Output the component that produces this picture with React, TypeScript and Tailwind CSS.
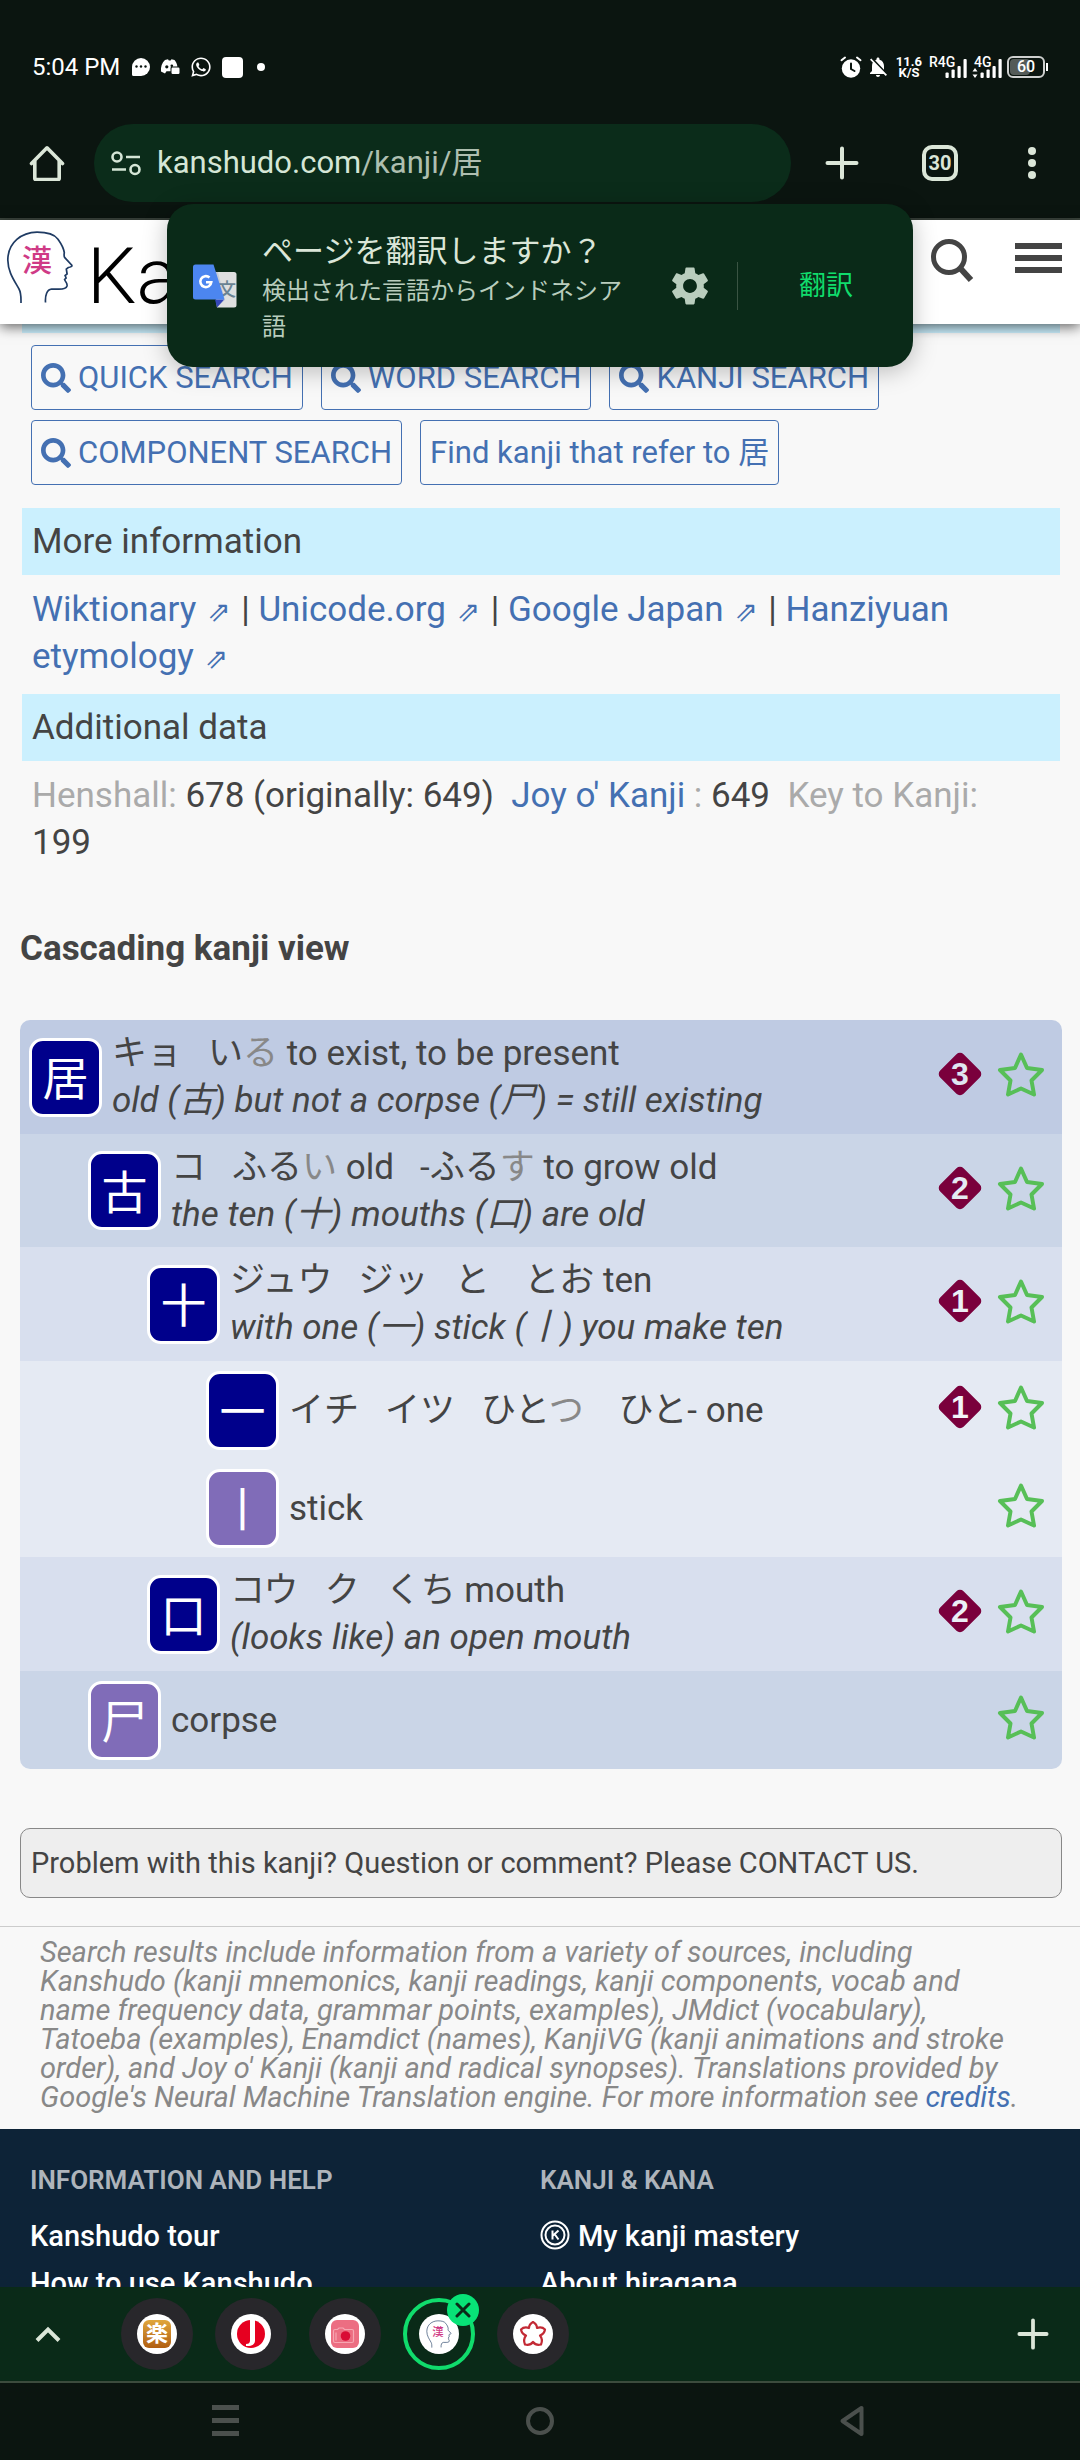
import type { ReactNode } from "react";
import { FaSearch, FaWhatsapp } from "react-icons/fa";
import { MdSettings, MdNotificationsOff } from "react-icons/md";

/* ---------- small drawings ---------- */

function ChatIcon() {
  return (
    <svg viewBox="0 0 18 18" className="size-[18px]" aria-hidden="true">
      <path d="M9 0a9 9 0 0 1 0 18H1.500a1.500 1.500 0 0 1-1.500-1.500V9a9 9 0 0 1 9-9z" fill="#fff" />
      <circle cx="4.500" cy="8.500" r="1.200" fill="#0b1510" />
      <circle cx="9" cy="8.500" r="1.200" fill="#0b1510" />
      <circle cx="13.500" cy="8.500" r="1.200" fill="#0b1510" />
    </svg>
  );
}

function ControllerIcon() {
  return (
    <svg viewBox="0 0 20 18" className="h-[18px] w-5" aria-hidden="true">
      <path d="M5 2l3-.8.8 1.300h1.800L11.500 1.200 14.500 2c1.600 1.800 2.600 4 2.900 6.500H12a1.500 1.500 0 0 0-1.500 1.500v3.200H6.500L5 15.500 1 13.500C.5 9 2 4.800 5 2z" fill="#fff" />
      <circle cx="6.800" cy="8.800" r="1.600" fill="#0b1510" />
      <circle cx="11.800" cy="7.800" r="1.300" fill="#0b1510" />
      <rect x="11.500" y="9.500" width="8" height="6.500" rx="1.200" fill="#fff" />
    </svg>
  );
}

function AlarmIcon() {
  return (
    <svg viewBox="0 0 22 22" className="size-[22px]" fill="none" stroke="#fff" strokeLinecap="round" aria-hidden="true">
      <circle cx="11" cy="12.500" r="9.200" fill="#fff" stroke="none" />
      <path d="M1.500 4.200 5 1.500M20.500 4.200 17 1.500" strokeWidth="2" />
      <path d="M11 7.500v5.500l3.500 2" stroke="#0b1510" strokeWidth="2" />
    </svg>
  );
}

function SignalBars({ arrows = false }: { arrows?: boolean }) {
  return (
    <svg viewBox="0 0 30 20" className="h-5 w-[30px]" aria-hidden="true">
      {arrows && <path d="M3 10l2.500 3.500h-5zM3 20l2.500-3.500h-5z" fill="#fff" />}
      <rect x="8.500" y="14.500" width="3.200" height="5.500" rx="1" fill="#fff" />
      <rect x="14.500" y="11.500" width="3.200" height="8.500" rx="1" fill="#fff" />
      <rect x="20.500" y="8" width="3.200" height="12" rx="1" fill="#fff" />
      <rect x="26.500" y="1" width="3.200" height="19" rx="1" fill="#fff" />
    </svg>
  );
}

function TuneIcon() {
  return (
    <svg viewBox="0 0 32 26" className="h-[26px] w-8" fill="none" stroke="#d5e6d6" strokeWidth="2.600" aria-hidden="true">
      <circle cx="7" cy="7" r="4.500" />
      <path d="M16 7h14M2 19.500h14" />
      <circle cx="25" cy="19.500" r="4.500" />
    </svg>
  );
}

function HomeIcon() {
  return (
    <svg viewBox="0 0 36 36" className="size-9" fill="none" stroke="#dbe6d8" strokeWidth="3.600" strokeLinejoin="round" aria-hidden="true">
      <path d="M2.500 18.500 18 2.800l15.500 15.700" strokeLinecap="round" />
      <path d="M5.800 16v17.500a1 1 0 0 0 1 1h22.400a1 1 0 0 0 1-1V16" />
    </svg>
  );
}

function PlusIcon({ className }: { className: string }) {
  return (
    <svg viewBox="0 0 34 34" className={className} stroke="#dbe6d8" strokeWidth="4" strokeLinecap="round" aria-hidden="true">
      <path d="M17 2.500v29M2.500 17h29" />
    </svg>
  );
}

function HeadLogo({ className }: { className: string }) {
  return (
    <svg viewBox="0 0 70 74" className={className} fill="none" aria-hidden="true">
      <path
        d="M16 73c0-6 .3-10-2-14C9 50 3 42 2.800 30 3 12 17 2.500 32 2.200c10 0 17 1.500 21 7 3.500 5 5.500 7.500 6.300 13.500-.5 3-.3 4 .5 5l7 7.500c.5 1.200-1 1.800-3.500 2.300l-2 1.500.8 5-2 1.500 1 2.500-1.500 1.500c1 3 3 3.500 2.400 6.500-.8 2.800-4 3.200-8 3.200h-7.500c-4.500.3-6.500 6-6 13.300"
        stroke="#1f3b63"
        strokeWidth="1.700"
      />
      <text x="32" y="41" textAnchor="middle" fontSize="30" fontWeight="500" fill="#cf3a86" fontFamily='"Noto Sans CJK JP", sans-serif'>
        漢
      </text>
    </svg>
  );
}

function TranslateIcon() {
  return (
    <svg viewBox="0 0 44 44" className="size-11 shrink-0" aria-hidden="true">
      <path d="M21 8h20a2.500 2.500 0 0 1 2.500 2.500v30.500a2.500 2.500 0 0 1-2.500 2.500H24z" fill="#dfe0e0" />
      <path d="M21 8h4l7 28-8 7.500z" fill="#c6cbd6" />
      <text x="34" y="32" textAnchor="middle" fontSize="18" fontWeight="500" fill="#6a8393" fontFamily='"Noto Sans CJK JP", sans-serif'>
        文
      </text>
      <path d="M22 35.500h9.200L24 43.500z" fill="#3547b8" />
      <path d="M2.500.5h18L31.500 35.500h-29A2.500 2.500 0 0 1 0 33V3A2.500 2.500 0 0 1 2.500.5z" fill="#4c86f0" />
      <path d="M16.500 13.500a5.500 5.500 0 1 0 1.800 4.700h-5.300" fill="none" stroke="#fff" strokeWidth="2.600" />
    </svg>
  );
}

function StarIcon() {
  return (
    <svg viewBox="0 0 48 46" className="h-[46px] w-12" fill="none" stroke="#57bf57" strokeWidth="4" strokeLinejoin="round" aria-hidden="true">
      <path d="M24 3.500 30 17 45 19 34.500 29.500 37 43.500 24 37.500 11 43.500 13.500 29.500 3 19 18 17z" />
    </svg>
  );
}

function LevelBadge({ level, color }: { level: number; color: string }) {
  return (
    <svg viewBox="0 0 44 44" className="size-11" role="img" aria-label={`Level ${level}`}>
      <rect x="5.500" y="5.500" width="33" height="33" rx="5" fill="#7a003c" transform="rotate(45 22 22)" />
      <text x="22" y="33" textAnchor="middle" fontSize="32" fontWeight="700" fill={color} fontFamily='"Liberation Sans", sans-serif'>
        {level}
      </text>
    </svg>
  );
}

function BlossomIcon() {
  return (
    <svg viewBox="0 0 28 28" className="size-7" fill="none" stroke="#c32a35" strokeWidth="2.200" strokeLinejoin="round" aria-hidden="true">
      <path d="M14 2c2.500 1.500 4 3.500 4 6 3-1 6-.5 8 1.500-.5 3-2 5-5 6 2 2.500 2.500 5.500 1 9-3.500.8-6 .2-8-2.500-2 2.700-4.500 3.300-8 2.500-1.500-3.500-1-6.500 1-9-3-1-4.500-3-5-6 2-2 5-2.500 8-1.500 0-2.500 1.500-4.500 4-6z" />
    </svg>
  );
}

/* ---------- browser chrome ---------- */

function StatusBar() {
  return (
    <div className="flex h-[124px] items-start justify-between pt-[53px] pr-8 pl-8 text-white">
      <div className="flex h-7 items-center">
        <span className="text-2xl leading-7">5:04 PM</span>
        <span className="ml-3 flex items-center gap-[10px]">
          <ChatIcon />
          <ControllerIcon />
          <FaWhatsapp className="size-[22px]" />
          <span className="size-[21px] rounded bg-white" />
          <span className="ml-1 size-2 rounded-full bg-white" />
        </span>
      </div>
      <div className="flex h-7 items-center">
        <AlarmIcon />
        <MdNotificationsOff className="ml-1 size-6" />
        <div className="ml-[6px] text-center text-[13px] leading-[11px] font-bold">
          11.6
          <br />
          K/S
        </div>
        <div className="relative ml-[7px] flex h-[22px] w-[38px] items-end justify-end">
          <span className="absolute top-0 left-0 text-sm leading-3 font-medium">R4G</span>
          <SignalBars />
        </div>
        <div className="relative ml-[5px] flex h-[22px] w-[30px] items-end">
          <span className="absolute top-0 left-[2px] text-sm leading-3 font-medium">4G</span>
          <SignalBars arrows />
        </div>
        <div className="relative ml-[5px] flex h-[22px] w-[38px] items-center justify-center rounded-md border-2 border-white/80">
          <span className="absolute inset-y-px left-px w-5 rounded bg-white/30" />
          <span className="relative text-base leading-4 font-medium">60</span>
        </div>
        <span className="ml-px h-2 w-[2px] bg-white" />
      </div>
    </div>
  );
}

function TranslatePrompt() {
  return (
    <div
      role="dialog"
      aria-label="翻訳"
      className="absolute inset-x-0 top-[204px] z-20 mx-auto flex h-[163px] w-[746px] items-center rounded-[26px] bg-[#0a2a18] pr-[60px] pl-[26px] shadow-[0_4px_24px_rgba(0,0,0,0.25)]"
    >
      <TranslateIcon />
      <div className="ml-[25px] w-[372px] shrink-0 pt-1">
        <p className="text-[31px] leading-[42px] text-[#dbe6d8]">ページを翻訳しますか？</p>
        <p className="text-2xl leading-[36px] text-[#b9cdbd]">検出された言語からインドネシア語</p>
      </div>
      <button type="button" aria-label="設定" className="ml-[33px]">
        <MdSettings className="size-[46px] text-[#b9cdbd]" />
      </button>
      <span className="ml-6 h-12 w-px shrink-0 bg-[#3a5443]" />
      <button type="button" className="ml-auto text-[27px] leading-8 whitespace-nowrap text-[#10dc6c]">
        翻訳
      </button>
    </div>
  );
}

function Toolbar() {
  return (
    <div className="flex h-[96px] items-start border-b-2 border-[#3c463e] pr-11 pl-[29px]">
      <button type="button" aria-label="Home" className="flex h-[78px] items-center">
        <HomeIcon />
      </button>
      <button
        type="button"
        className="ml-[29px] flex h-[78px] flex-1 items-center rounded-full bg-[#0b2c1a] pl-4 text-left text-[31px] leading-[38px] text-[#d5e6d6]"
      >
        <TuneIcon />
        <span className="ml-[15px]">
          kanshudo.com<span className="text-[#aebfb0]">/kanji/居</span>
        </span>
      </button>
      <button type="button" aria-label="New tab" className="ml-[34px] flex h-[78px] items-center">
        <PlusIcon className="size-[34px]" />
      </button>
      <button type="button" className="ml-[63px] flex h-[78px] items-center">
        <span className="flex size-9 items-center justify-center rounded-[10px] border-4 border-[#dbe6d8] text-xl leading-none font-bold text-[#dbe6d8]">
          30
        </span>
      </button>
      <button type="button" aria-label="Menu" className="ml-[70px] flex h-[78px] flex-col items-center justify-center gap-1">
        <span className="size-2 rounded-full bg-[#dbe6d8]" />
        <span className="size-2 rounded-full bg-[#dbe6d8]" />
        <span className="size-2 rounded-full bg-[#dbe6d8]" />
      </button>
    </div>
  );
}

function SiteHeader() {
  return (
    <header className="relative z-10 flex h-[104px] shrink-0 items-start bg-white pr-[18px] pl-[5px] shadow-[0_3px_12px_rgba(0,0,0,0.6)]">
      <a href="#home" className="flex items-start text-black">
        <HeadLogo className="mt-[10px] h-[74px] w-[70px]" />
        <span className="ml-3 pt-3 text-[78px] leading-[90px] font-light">Kanshudo</span>
      </a>
      <button type="button" aria-label="Search" className="mt-[17px] ml-auto">
        <svg viewBox="0 0 46 46" className="size-[46px]" fill="none" stroke="#444" aria-hidden="true">
          <circle cx="20" cy="20" r="15.500" strokeWidth="5" />
          <path d="M31 31l11 12" strokeWidth="6" />
        </svg>
      </button>
      <button type="button" aria-label="Menu" className="mt-[23px] ml-10 flex flex-col gap-[6px]">
        <span className="h-[6px] w-[47px] bg-[#444]" />
        <span className="h-[6px] w-[47px] bg-[#444]" />
        <span className="h-[6px] w-[47px] bg-[#444]" />
      </button>
    </header>
  );
}

/* ---------- page content ---------- */

function SearchLink({ children, icon = true }: { children: ReactNode; icon?: boolean }) {
  return (
    <a href="#search" className="flex h-[65px] items-center gap-[7px] rounded border border-[#4470b2] px-[9px] text-[31px] leading-[38px] text-[#4470b2]">
      {icon && <FaSearch className="size-[30px]" />}
      <span>{children}</span>
    </a>
  );
}

function ExternalLink({ children }: { children: ReactNode }) {
  return (
    <a href="#external" className="text-[#4470b2]">
      {children} <span className="px-[2px] font-['DejaVu_Sans'] text-[28px] leading-none">⇗</span>
    </a>
  );
}

function SectionBar({ children }: { children: ReactNode }) {
  return <h2 className="bg-[#cbf0fe] px-[10px] py-[10px] leading-[47px]">{children}</h2>;
}

function Faint({ children }: { children: ReactNode }) {
  return <span className="text-[#888]">{children}</span>;
}

type Row = {
  id: string;
  glyph: string;
  indent: string;
  bg: string;
  color: string;
  height: string;
  level?: number;
  component?: boolean;
  reading: ReactNode;
  note?: string;
};

const rows: Row[] = [
  {
    id: "exist", glyph: "居", indent: "pl-[9px]", bg: "bg-[#bfcbe3]", color: "#dfe5f1", height: "h-[114px]", level: 3,
    reading: <>キョ &nbsp; い<Faint>る</Faint> to exist, to be present</>,
    note: "old (古) but not a corpse (尸) = still existing",
  },
  {
    id: "old", glyph: "古", indent: "pl-[68px]", bg: "bg-[#cad5e7]", color: "#e4eaf3", height: "h-[113px]", level: 2,
    reading: <>コ &nbsp; ふる<Faint>い</Faint> old &nbsp; -ふる<Faint>す</Faint> to grow old</>,
    note: "the ten (十) mouths (口) are old",
  },
  {
    id: "ten", glyph: "十", indent: "pl-[127px]", bg: "bg-[#d8dfee]", color: "#ebeff6", height: "h-[114px]", level: 1,
    reading: <>ジュウ &nbsp; ジッ &nbsp; と &nbsp;&nbsp; とお ten</>,
    note: "with one (一) stick (丨) you make ten",
  },
  {
    id: "one", glyph: "一", indent: "pl-[186px]", bg: "bg-[#e5eaf3]", color: "#f2f4f9", height: "h-[98px]", level: 1,
    reading: <>イチ &nbsp; イツ &nbsp; ひと<Faint>つ</Faint> &nbsp;&nbsp; ひと- one</>,
  },
  { id: "stick", glyph: "丨", indent: "pl-[186px]", bg: "bg-[#e5eaf3]", color: "#f2f4f9", height: "h-[98px]", component: true, reading: "stick" },
  {
    id: "mouth", glyph: "口", indent: "pl-[127px]", bg: "bg-[#d8dfee]", color: "#ebeff6", height: "h-[114px]", level: 2,
    reading: <>コウ &nbsp; ク &nbsp; くち mouth</>,
    note: "(looks like) an open mouth",
  },
  { id: "corpse", glyph: "尸", indent: "pl-[68px]", bg: "bg-[#cad5e7]", color: "#e4eaf3", height: "h-[98px]", component: true, reading: "corpse" },
];

function CascadeRow({ row }: { row: Row }) {
  const tile = row.component ? "bg-[#806cb8]" : "bg-[#00008b]";
  return (
    <li className={`flex items-center pr-[17px] ${row.indent} ${row.bg} ${row.height}`}>
      <a
        href={`#${row.id}`}
        className={`flex h-[79px] w-[73px] shrink-0 items-center justify-center rounded-[14px] border-[3px] border-white pt-1 text-[46px] leading-[64px] text-white ${tile}`}
      >
        {row.glyph}
      </a>
      <div className="ml-[10px] flex-1">
        <p>{row.reading}</p>
        {row.note && <p className="italic">{row.note}</p>}
      </div>
      <div className="flex items-center gap-[15px] pb-[6px]">
        {row.level && <LevelBadge level={row.level} color={row.color} />}
        <button type="button" aria-label={`Add ${row.glyph} to favorites`}>
          <StarIcon />
        </button>
      </div>
    </li>
  );
}

function Content() {
  return (
    <main className="min-h-0 flex-1 overflow-hidden bg-[#f8f8f8] text-[35px] leading-[47px] text-[#444]">
      <div className="mr-5 ml-[22px] h-[9px] bg-[#cbf0fe]" />
      <nav aria-label="Search tools" className="flex flex-wrap gap-x-[18px] gap-y-[10px] px-[31px] pt-3">
        <SearchLink>QUICK SEARCH</SearchLink>
        <SearchLink>WORD SEARCH</SearchLink>
        <SearchLink>KANJI SEARCH</SearchLink>
        <SearchLink>COMPONENT SEARCH</SearchLink>
        <SearchLink icon={false}>Find kanji that refer to 居</SearchLink>
      </nav>
      <div className="mt-[23px] mr-5 ml-[22px]">
        <SectionBar>More information</SectionBar>
        <p className="px-[10px] pt-[11px] pb-[14px]">
          <ExternalLink>Wiktionary</ExternalLink> | <ExternalLink>Unicode.org</ExternalLink> |{" "}
          <ExternalLink>Google Japan</ExternalLink> | <ExternalLink>Hanziyuan etymology</ExternalLink>
        </p>
        <SectionBar>Additional data</SectionBar>
        <p className="pt-[11px] pr-6 pl-[10px]">
          <span className="text-[#aaa]">Henshall:</span> 678 (originally: 649) &nbsp;
          <a href="#joy" className="text-[#4470b2]">Joy o' Kanji</a> <span className="text-[#aaa]">:</span> 649 &nbsp;
          <span className="text-[#aaa]">Key to Kanji:</span> 199
        </p>
      </div>
      <h2 className="mt-[59px] px-5 font-bold">Cascading kanji view</h2>
      <ul className="mt-12 mr-[18px] ml-5 overflow-hidden rounded-[10px]">
        {rows.map((row) => (
          <CascadeRow key={row.id} row={row} />
        ))}
      </ul>
      <p className="mt-[59px] mr-[18px] ml-5 rounded-[10px] border border-[#888] bg-[#eee] px-[10px] py-4 text-[29px] leading-[36px]">
        Problem with this kanji? Question or comment? Please CONTACT US.
      </p>
      <p className="mt-[28px] border-t border-[#ccc] pt-[11px] pr-12 pb-[17px] pl-10 text-[29px] leading-[29px] text-[#888] italic">
        Search results include information from a variety of sources, including Kanshudo (kanji mnemonics, kanji readings,
        kanji components, vocab and name frequency data, grammar points, examples), JMdict (vocabulary), Tatoeba (examples),
        Enamdict (names), KanjiVG (kanji animations and stroke order), and Joy o' Kanji (kanji and radical synopses).
        Translations provided by Google's Neural Machine Translation engine. For more information see{" "}
        <a href="#credits" className="text-[#4470b2]">credits</a>.
      </p>
      <footer className="grid grid-cols-2 bg-[#0d2337] px-[30px] pt-8 pb-8 text-[29px] leading-[47px] font-medium text-white">
        <section>
          <h3 className="text-[26px] leading-[38px] font-semibold text-[#aeb4bb]">INFORMATION AND HELP</h3>
          <ul className="mt-[14px]">
            <li><a href="#tour">Kanshudo tour</a></li>
            <li><a href="#use">How to use Kanshudo</a></li>
          </ul>
        </section>
        <section>
          <h3 className="text-[26px] leading-[38px] font-semibold text-[#aeb4bb]">KANJI &amp; KANA</h3>
          <ul className="mt-[14px]">
            <li>
              <a href="#mastery" className="flex items-center gap-2">
                <svg viewBox="0 0 30 30" className="mb-1 size-[30px]" fill="none" stroke="#fff" aria-hidden="true">
                  <circle cx="15" cy="15" r="13.500" strokeWidth="2" />
                  <circle cx="15" cy="15" r="9.500" strokeWidth="2" />
                  <path d="M12.500 10.500v9M18.500 10.500l-5.500 5M14.500 14l4 5.500" strokeWidth="2" />
                </svg>
                My kanji mastery
              </a>
            </li>
            <li><a href="#hiragana">About hiragana</a></li>
          </ul>
        </section>
      </footer>
    </main>
  );
}

/* ---------- bottom bars ---------- */

function TabBubble({ label, active = false, children }: { label: string; active?: boolean; children: ReactNode }) {
  return (
    <button
      type="button"
      aria-label={label}
      className={`relative flex size-[72px] items-center justify-center rounded-full ${active ? "border-4 border-[#10dc6c]" : "bg-[#28272b]"}`}
    >
      <span className="flex size-10 items-center justify-center overflow-hidden rounded-full bg-white">{children}</span>
      {active && (
        <span className="absolute -top-[8px] -right-[8px] flex size-8 items-center justify-center rounded-full bg-[#08e277]">
          <svg viewBox="0 0 16 16" className="size-4" stroke="#0a2a18" strokeWidth="3" strokeLinecap="round" aria-hidden="true">
            <path d="M2 2l12 12M14 2 2 14" />
          </svg>
        </span>
      )}
    </button>
  );
}

function TabStrip() {
  return (
    <div className="flex h-[96px] shrink-0 items-center border-b-2 border-[#3c4c3e] bg-[#0a2a18] pr-[31px] pl-[35px]">
      <button type="button" aria-label="Expand tabs">
        <svg viewBox="0 0 26 16" className="h-4 w-[26px]" fill="none" stroke="#dbe6d8" strokeWidth="4" aria-hidden="true">
          <path d="M2 14.500 13 3.500l11 11" />
        </svg>
      </button>
      <div className="ml-[60px] flex gap-[22px]">
        <TabBubble label="楽">
          <span className="flex size-7 items-center justify-center rounded-md bg-linear-to-b from-[#e0a63c] to-[#b05f10] text-[22px] leading-7 font-bold text-white">
            楽
          </span>
        </TabBubble>
        <TabBubble label="J dictionary">
          <svg viewBox="0 0 28 28" className="size-7" aria-hidden="true">
            <circle cx="14" cy="14" r="14" fill="#e60020" />
            <path d="M13 0h5v20.500c0 4-3.500 6-9 5.500v-2c2.800 0 4-1 4-3.500z" fill="#fff" />
          </svg>
        </TabBubble>
        <TabBubble label="Camera">
          <svg viewBox="0 0 28 28" className="size-7" aria-hidden="true">
            <rect width="28" height="28" rx="6" fill="#ec6e82" />
            <path d="M4 9.500h2.500L8 8h4l1.500 1.500H21a1.500 1.500 0 0 1 1.500 1.500v10a1.500 1.500 0 0 1-1.500 1.500H4A1.500 1.500 0 0 1 2.500 21V11A1.500 1.500 0 0 1 4 9.500zM5 12.500v8" fill="none" stroke="#f7a6b2" strokeWidth="1.200" />
            <circle cx="14.500" cy="16" r="4.800" fill="#d90b35" />
          </svg>
        </TabBubble>
        <TabBubble label="Kanshudo" active>
          <HeadLogo className="size-7" />
        </TabBubble>
        <TabBubble label="Blossom">
          <BlossomIcon />
        </TabBubble>
      </div>
      <button type="button" aria-label="New tab in group" className="ml-auto">
        <PlusIcon className="size-8" />
      </button>
    </div>
  );
}

function SystemNav() {
  return (
    <nav aria-label="System" className="grid h-[77px] shrink-0 grid-cols-[1fr_180px_1fr] items-center bg-[#0b1510] px-[135px] pb-[2px]">
      <button type="button" aria-label="Recent apps" className="ml-[77px] flex w-[27px] flex-col gap-2 justify-self-start">
        <span className="h-[5px] w-full bg-[#4b504d]" />
        <span className="h-[5px] w-full bg-[#4b504d]" />
        <span className="h-[5px] w-full bg-[#4b504d]" />
      </button>
      <button type="button" aria-label="Home screen" className="size-[28px] justify-self-center rounded-full border-4 border-[#4b504d]" />
      <button type="button" aria-label="Back" className="mr-[80px] justify-self-end">
        <svg viewBox="0 0 26 32" className="h-8 w-[26px]" fill="none" stroke="#4b504d" strokeWidth="4" strokeLinejoin="round" aria-hidden="true">
          <path d="M22.500 3v26L3.500 16z" />
        </svg>
      </button>
    </nav>
  );
}

export default function App() {
  return (
    <div className="relative flex h-screen flex-col overflow-hidden font-[Roboto,'Noto_Sans_CJK_JP',sans-serif]">
      <div className="shrink-0 bg-[#0b1510]">
        <StatusBar />
        <Toolbar />
      </div>
      <TranslatePrompt />
      <SiteHeader />
      <Content />
      <TabStrip />
      <SystemNav />
    </div>
  );
}
